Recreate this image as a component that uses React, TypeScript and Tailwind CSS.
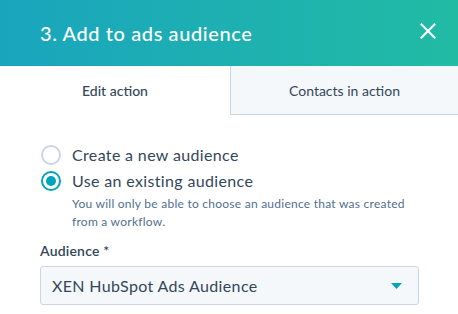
import React from "react";

export default function App() {
  return (
    <div
      className="w-[458px] h-[314px] bg-white overflow-hidden text-[#33475b]"
      style={{ fontFamily: "Lato, 'Noto Sans', sans-serif" }}
    >
      <div className="h-[66px] flex items-center justify-between pl-[40px] pr-[22px] bg-[linear-gradient(90deg,#1aa5be_0%,#21bba4_100%)]">
        <div className="text-white text-[20px] font-medium tracking-[0.6px]">3. Add to ads audience</div>
        <svg width="16" height="16" viewBox="0 0 16 16" className="mb-[4px]">
          <path d="M1.5 1.5 L14.5 14.5 M14.5 1.5 L1.5 14.5" stroke="white" strokeWidth="2" strokeLinecap="square" />
        </svg>
      </div>
      <div className="flex h-[49px]">
        <div className="w-[230px] flex items-center justify-center text-[14px] font-medium">Edit action</div>
        <div className="flex-1 flex items-center justify-center text-[14px] bg-[#f5f8fa] border-l border-b border-[#cbd6e2]">
          Contacts in action
        </div>
      </div>
      <div className="pl-[41px] pr-[39px] pt-[27px]">
        <div className="flex items-center gap-[11px] h-[25px]">
          <span className="w-[20px] h-[20px] rounded-full border-2 border-[#cbd6e2] bg-white" />
          <span className="text-[16px] tracking-[0.35px]">Create a new audience</span>
        </div>
        <div className="flex items-center gap-[11px] h-[25px] mt-[1px]">
          <span className="w-[20px] h-[20px] rounded-full border-2 border-[#00a4bd] bg-white flex items-center justify-center">
            <span className="w-[10px] h-[10px] rounded-full bg-[#00a4bd]" />
          </span>
          <span className="text-[16px] tracking-[0.35px]">Use an existing audience</span>
        </div>
        <div className="pl-[31px] text-[12px] leading-[18px] text-[#516f90] tracking-[0.25px] mt-[2px]">
          You will only be able to choose an audience that was created
          <br />
          from a workflow.
        </div>
        <div className="mt-[9px] text-[14px] font-semibold tracking-[0.2px] -ml-[1px]">Audience *</div>
        <div className="mt-[5px] -ml-[1px] h-[39px] border border-[#cbd6e2] rounded-[3px] bg-[#f5f8fa] flex items-center justify-between pl-[11px] pr-[16px]">
          <span className="text-[16px] tracking-[0.35px]">XEN HubSpot Ads Audience</span>
          <svg width="11" height="6" viewBox="0 0 11 6">
            <path d="M0 0 L11 0 L5.5 6 Z" fill="#00a4bd" />
          </svg>
        </div>
      </div>
    </div>
  );
}
